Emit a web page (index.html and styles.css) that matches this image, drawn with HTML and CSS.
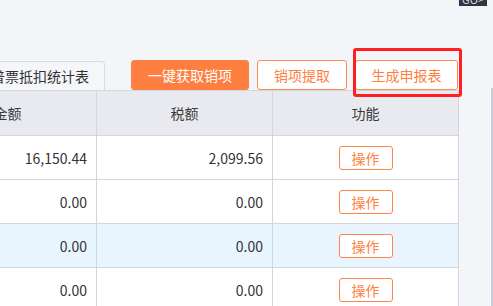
FILE: index.html
```html
<!DOCTYPE html>
<html lang="zh-CN">
<head>
    <meta charset="UTF-8">
    <title>销项申报</title>
    <link rel="stylesheet" href="styles.css">
</head>
<body>
    <div class="go-tip">GO&gt;</div>
    <div class="main">
        <div class="content">
            <div class="panel">
                <div class="toolbar">
                    <div class="tab">普票抵扣统计表</div>
                    <div class="actions">
                        <button class="btn btn-fill">一键获取销项</button>
                        <button class="btn">销项提取</button>
                        <div class="mark">
                            <button class="btn btn-report">生成申报表</button>
                        </div>
                    </div>
                </div>
                <table class="grid">
                    <thead>
                        <tr>
                            <th class="col-a">金额</th>
                            <th class="col-b">税额</th>
                            <th class="col-c">功能</th>
                        </tr>
                    </thead>
                    <tbody>
                        <tr>
                            <td class="num">16,150.44</td>
                            <td class="num">2,099.56</td>
                            <td class="op"><span class="op-btn">操作</span></td>
                        </tr>
                        <tr>
                            <td class="num">0.00</td>
                            <td class="num">0.00</td>
                            <td class="op"><span class="op-btn">操作</span></td>
                        </tr>
                        <tr class="hover">
                            <td class="num">0.00</td>
                            <td class="num">0.00</td>
                            <td class="op"><span class="op-btn">操作</span></td>
                        </tr>
                        <tr>
                            <td class="num">0.00</td>
                            <td class="num">0.00</td>
                            <td class="op"><span class="op-btn">操作</span></td>
                        </tr>
                    </tbody>
                </table>
            </div>
        </div>
        <div class="gutter"></div>
        <div class="scroll-line"></div>
    </div>
</body>
</html>
```

FILE: styles.css
```css
*{
    margin: 0;
    padding: 0;
    box-sizing: border-box;
}
body{
    background: #f4f5f9;
    font-family: "Noto Sans CJK SC", "Noto Sans", sans-serif;
    font-size: 14px;
    color: #333;
    overflow: hidden;
}
.main{
    display: flex;
    height: 306px;
}
.content{
    width: 459px;
    flex-shrink: 0;
}
.panel{
    width: 540px;
    margin-left: -81px;
}
.gutter{
    flex: 1;
}
.scroll-line{
    width: 2px;
    margin-top: 88px;
    background: #c9cdd5;
}
.toolbar{
    display: flex;
    justify-content: space-between;
    align-items: flex-end;
    padding-top: 60px;
    height: 90px;
}
.tab{
    width: 186px;
    height: 29px;
    border: 1px solid #d9dce3;
    border-bottom: none;
    border-radius: 0 4px 0 0;
    background: #f5f6fa;
    display: flex;
    align-items: center;
    justify-content: flex-end;
    padding-right: 15px;
    white-space: nowrap;
    overflow: hidden;
    color: #333;
    line-height: 1;
}
.actions{
    display: flex;
    gap: 8px;
    padding-right: 1px;
}
.btn{
    height: 30px;
    border: 1px solid #ff8b50;
    border-radius: 3px;
    background: #fff;
    color: #ff7f41;
    font-family: "Noto Sans CJK SC", sans-serif;
    font-size: 14px;
    width: 90px;
    line-height: 1;
}
.btn-fill{
    width: 118px;
    background: #fe7f3f;
    border-color: #fe7f3f;
    color: #fff;
}
.btn-report{
    width: 103px;
}
.mark{
    position: relative;
    display: flex;
}
.mark::after{
    content: "";
    box-sizing: border-box;
    position: absolute;
    left: -2px;
    top: -12px;
    width: 109px;
    height: 49px;
    border: 3px solid #ff1f1f;
    border-radius: 3px;
}
.grid{
    width: 540px;
    table-layout: fixed;
    border-collapse: separate;
    border-spacing: 0;
    border-top: 1px solid #d3d6dd;
    background: #fff;
}
.grid th,
.grid td{
    border-right: 1px solid #d3d6dd;
    border-bottom: 1px solid #d3d6dd;
    padding: 0;
    white-space: nowrap;
}
.grid th{
    height: 45px;
    background: #e9eaef;
    font-weight: normal;
    color: #3a3a3a;
    text-align: center;
}
.grid td{
    height: 44px;
}
.col-a{
    width: 178px;
}
.col-b{
    width: 176px;
}
.col-c{
    width: 186px;
}
.num{
    text-align: right;
    padding-right: 9px !important;
    color: #333;
}
.op{
    text-align: center;
}
.hover td{
    background: #e8f4fe;
}
.op-btn{
    display: inline-flex;
    align-items: center;
    justify-content: center;
    width: 54px;
    height: 24px;
    border: 1px solid #ff8547;
    border-radius: 3px;
    background: #fff;
    color: #ff7f41;
    line-height: 1;
    vertical-align: middle;
}
.go-tip{
    position: absolute;
    top: -8px;
    left: 459px;
    width: 28px;
    height: 14px;
    background: #30353f;
    color: #d8dbe0;
    font-size: 11px;
    line-height: 14px;
    text-align: center;
}
```
